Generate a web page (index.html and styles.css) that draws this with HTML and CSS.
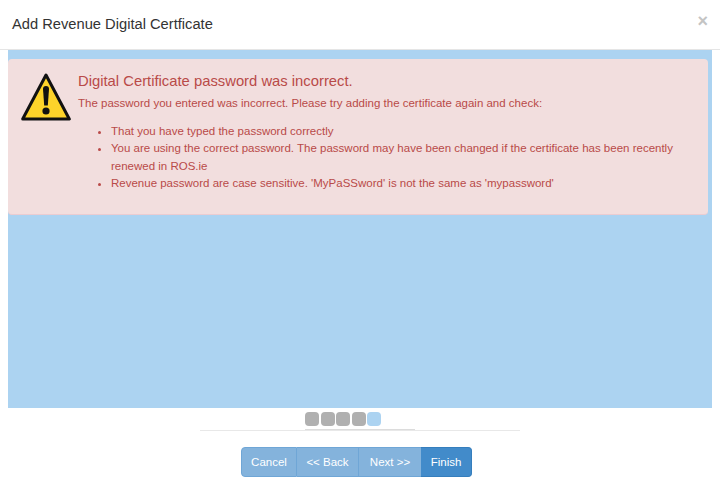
FILE: index.html
```html
<!DOCTYPE html>
<html lang="en">
  <head>
    <meta charset="UTF-8" />
    <title>Add Revenue Digital Certficate</title>
    <link rel="stylesheet" href="styles.css">
  </head>
  <body>
    <div class="modal">
      <div class="modal-header">
        <h4>Add Revenue Digital Certficate</h4>
        <span class="close">×</span>
      </div>
      <div class="wizard-body">
        <div class="alert">
          <svg class="alert-icon" width="50" height="50" viewBox="0 0 50 50">
            <path d="M25 3 L48.300 47 L1.700 47 Z" fill="#fdd32a" stroke="#111" stroke-width="3" stroke-linejoin="round" />
            <path d="M22 17 a3 3 0 0 1 6 0 L26.800 33.500 h-3.600 Z" fill="#111" />
            <circle cx="25" cy="39" r="3.600" fill="#111" />
          </svg>
          <div class="alert-text">
            <h4>Digital Certificate password was incorrect.</h4>
            <p>The password you entered was incorrect. Please try adding the certificate again and check:</p>
            <ul>
              <li>That you have typed the password correctly</li>
              <li>You are using the correct password. The password may have been changed if the certificate has been recently renewed in ROS.ie</li>
              <li>Revenue password are case sensitive. 'MyPaSSword' is not the same as 'mypassword'</li>
            </ul>
          </div>
        </div>
      </div>
      <div class="steps">
        <span class="step"></span>
        <span class="step"></span>
        <span class="step"></span>
        <span class="step"></span>
        <span class="step current"></span>
      </div>
      <div class="progress-line"></div>
      <div class="btn-group">
        <button class="btn btn-cancel">Cancel</button>
        <button class="btn btn-back">&lt;&lt; Back</button>
        <button class="btn btn-next">Next &gt;&gt;</button>
        <button class="btn btn-finish">Finish</button>
      </div>
    </div>
  </body>
</html>
```

FILE: styles.css
```css
* {
  padding: 0;
  margin: 0;
  box-sizing: border-box;
}
html,
body {
  height: 100%;
  overflow: hidden;
  background-color: #fff;
  font-family: "Liberation Sans", Arial, sans-serif;
  font-size: 11.500px;
  line-height: 17.500px;
}

.modal-header {
  height: 50px;
  padding: 0 12px;
  border-bottom: 1px solid #e5e5e5;
  display: flex;
  align-items: center;
  justify-content: space-between;
}
.modal-header h4 {
  font-size: 14.700px;
  font-weight: normal;
  color: #333;
}
.close {
  font-size: 18px;
  font-weight: bold;
  color: #c4c4c4;
  margin: -6px 0 0 0;
}

.wizard-body {
  height: 358px;
  margin: 0 8px;
  padding-top: 9px;
  background-color: #acd3f1;
}

.alert {
  width: 700px;
  height: 156px;
  padding: 13px 13px 0;
  display: flex;
  gap: 7px;
  background-color: #f2dede;
  border-bottom: 1px solid #ebccd1;
  border-radius: 4px;
  color: #b94a48;
}
.alert-icon {
  flex: none;
}
.alert-text h4 {
  font-size: 14.800px;
  font-weight: normal;
  line-height: 18px;
  margin-bottom: 5px;
}
.alert-text p {
  margin-bottom: 10px;
}
.alert-text ul {
  padding-left: 33px;
}

.steps {
  width: 110px;
  height: 18px;
  margin: 4px auto 0;
  display: flex;
  gap: 1.500px;
  border-bottom: 1px solid #dcdcdc;
}
.step {
  width: 14px;
  height: 14px;
  border-radius: 4px;
  background-color: #b0b0b0;
}
.step.current {
  background-color: #acd3f1;
}

.progress-line {
  width: 320px;
  margin: 0 auto;
  border-top: 1px solid #e8e8e8;
}

.btn-group {
  display: flex;
  justify-content: center;
  margin-top: 16px;
  padding-right: 7px;
}
.btn {
  height: 30px;
  border: 1px solid #6fa6d6;
  border-left-width: 0;
  background-color: #84b3dc;
  color: #fff;
  font-family: inherit;
  font-size: 11.500px;
}
.btn-cancel {
  width: 56px;
  border-left-width: 1px;
  border-radius: 4px 0 0 4px;
}
.btn-back {
  width: 62px;
}
.btn-next {
  width: 62px;
  border-right-width: 0;
}
.btn-finish {
  width: 51px;
  background-color: #428bca;
  border-color: #357ebd;
  border-radius: 0 4px 4px 0;
}
```
